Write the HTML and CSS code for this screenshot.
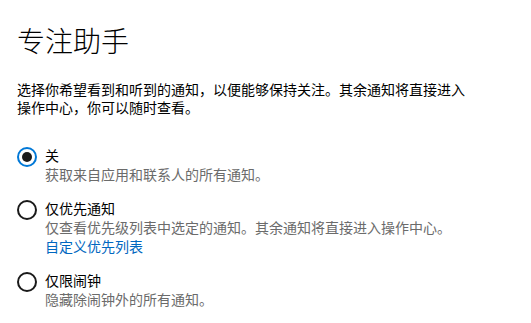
FILE: index.html
```html
<!DOCTYPE html>
<html lang="zh-CN">
<head>
<meta charset="utf-8">
<title>专注助手</title>
<link rel="stylesheet" href="styles.css">
</head>
<body>
<main class="page">
  <h1 class="title">专注助手</h1>
  <p class="intro">选择你希望看到和听到的通知，以便能够保持关注。其余通知将直接进入操作中心，你可以随时查看。</p>
  <div class="options">
    <label class="option">
      <span class="radio checked"><span class="dot"></span></span>
      <span class="text">
        <span class="name">关</span>
        <span class="desc">获取来自应用和联系人的所有通知。</span>
      </span>
    </label>
    <label class="option">
      <span class="radio"></span>
      <span class="text">
        <span class="name">仅优先通知</span>
        <span class="desc">仅查看优先级列表中选定的通知。其余通知将直接进入操作中心。</span>
        <a class="link" href="#">自定义优先列表</a>
      </span>
    </label>
    <label class="option">
      <span class="radio"></span>
      <span class="text">
        <span class="name">仅限闹钟</span>
        <span class="desc">隐藏除闹钟外的所有通知。</span>
      </span>
    </label>
  </div>
</main>
</body>
</html>
```

FILE: styles.css
```css
html, body {
  margin: 0;
  padding: 0;
  background: #ffffff;
}
body {
  font-family: "Noto Sans CJK SC", "Noto Sans", sans-serif;
  color: #000000;
}
.page {
  padding: 22px 0 0 17px;
}
.title {
  margin: 0;
  font-size: 28px;
  line-height: 36px;
  font-weight: 300;
}
.intro {
  margin: 22px 0 0 0;
  max-width: 455px;
  font-size: 14px;
  line-height: 18px;
}
.options {
  margin-top: 30px;
  display: flex;
  flex-direction: column;
  gap: 15px;
}
.option {
  display: flex;
  gap: 8px;
  font-size: 14px;
  line-height: 19px;
}
.radio {
  flex: none;
  width: 20px;
  height: 20px;
  box-sizing: border-box;
  border: 2px solid #1a1a1a;
  border-radius: 50%;
  margin-top: 1px;
  display: flex;
  align-items: center;
  justify-content: center;
}
.radio.checked {
  border-color: #0078d7;
}
.dot {
  width: 10px;
  height: 10px;
  border-radius: 50%;
  background: #1a1a1a;
}
.text {
  display: flex;
  flex-direction: column;
}
.desc {
  color: #6b6b6b;
}
.link {
  color: #0067c0;
  text-decoration: none;
}
```
